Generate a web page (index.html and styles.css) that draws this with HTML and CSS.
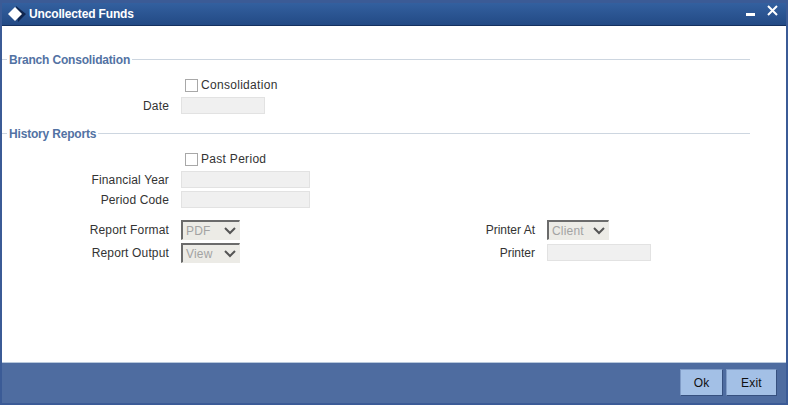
FILE: index.html
```html
<!DOCTYPE html>
<html lang="en">
<head>
<meta charset="utf-8">
<title>Uncollected Funds</title>
<link rel="stylesheet" href="styles.css">
</head>
<body>
<div class="window">
  <header class="titlebar">
    <svg class="logo" width="20" height="17" viewBox="0 0 20 17" aria-hidden="true">
      <path d="M9 0 L19 8 L11 16 Z" fill="#10264f"/>
      <path d="M8 1 L15 8 L8 15 L1 8 Z" fill="#ffffff"/>
    </svg>
    <h1 class="title">Uncollected Funds</h1>
    <div class="winbtns">
      <span class="minimize"></span>
      <svg class="close" width="11" height="11" viewBox="0 0 11 11" aria-hidden="true">
        <path d="M1 1 L10 10 M10 1 L1 10" stroke="#fff" stroke-width="2" fill="none"/>
      </svg>
    </div>
  </header>
  <main class="content">
    <section class="section first">
      <div class="legend"><span class="legend-text">Branch Consolidation</span></div>
      <div class="row check-row">
        <span class="label"></span>
        <label class="check"><span class="box"></span>Consolidation</label>
      </div>
      <div class="row date-row">
        <span class="label">Date</span>
        <span class="input w-date"></span>
      </div>
    </section>
    <section class="section second">
      <div class="legend"><span class="legend-text">History Reports</span></div>
      <div class="row check-row past">
        <span class="label"></span>
        <label class="check"><span class="box"></span>Past Period</label>
      </div>
      <div class="row year-row">
        <span class="label">Financial Year</span>
        <span class="input w-wide"></span>
      </div>
      <div class="row code-row">
        <span class="label">Period Code</span>
        <span class="input w-wide"></span>
      </div>
      <div class="columns">
        <div class="column">
          <div class="row sel-row">
            <span class="label">Report Format</span>
            <span class="select w-sel">PDF<svg class="chev" width="12" height="8" viewBox="0 0 12 8" aria-hidden="true"><path d="M1 1 L6 6 L11 1" stroke="#555" stroke-width="2" fill="none"/></svg></span>
          </div>
          <div class="row sel-row second-sel">
            <span class="label">Report Output</span>
            <span class="select w-sel">View<svg class="chev" width="12" height="8" viewBox="0 0 12 8" aria-hidden="true"><path d="M1 1 L6 6 L11 1" stroke="#555" stroke-width="2" fill="none"/></svg></span>
          </div>
        </div>
        <div class="column col-right">
          <div class="row sel-row">
            <span class="label">Printer At</span>
            <span class="select w-client">Client<svg class="chev" width="12" height="8" viewBox="0 0 12 8" aria-hidden="true"><path d="M1 1 L6 6 L11 1" stroke="#555" stroke-width="2" fill="none"/></svg></span>
          </div>
          <div class="row sel-row second-sel">
            <span class="label">Printer</span>
            <span class="input w-printer"></span>
          </div>
        </div>
      </div>
    </section>
  </main>
  <footer class="footer">
    <button class="btn" type="button">Ok</button>
    <button class="btn" type="button">Exit</button>
  </footer>
</div>
</body>
</html>
```
FILE: styles.css
```css
* { box-sizing: border-box; }
html, body { margin: 0; padding: 0; }
body { width: 788px; height: 405px; overflow: hidden; font-family: "Liberation Sans", Arial, sans-serif; font-size: 12px; color: #333; }
.window { width: 788px; height: 405px; display: flex; flex-direction: column; background: #3b5b96; padding: 3px 2px 2px 2px; }
.titlebar { height: 23px; flex: none; display: flex; align-items: center; background: linear-gradient(#33609f, #234a85); border-bottom: 1px solid #14305f; color: #fff; padding-left: 5px; }
.logo { flex: none; margin-top: 1px; }
.title { margin: 0 0 0 2px; font-size: 12px; font-weight: bold; color: #fff; letter-spacing: -.15px; }
.winbtns { margin-left: auto; align-self: flex-start; display: flex; align-items: flex-start; gap: 12px; padding-right: 8px; }
.minimize { width: 9px; height: 3px; background: #fff; margin-top: 10px; }
.close { margin-top: 2px; }
.content { flex: 1; background: #fff; border-bottom: 1px solid #b8c8dc; padding-top: 26px; }
.section { width: 748px; }
.second { margin-top: 12px; }
.legend { height: 14px; display: flex; align-items: center; padding-left: 5px; position: relative; }
.legend::before { content: ""; position: absolute; left: 0; right: 0; top: 7px; height: 1px; background: #cdd6e0; }
.legend-text { position: relative; top: 1px; background: #fff; padding: 0 2px; font-weight: bold; color: #5272a3; letter-spacing: -.18px; }
.row { display: flex; align-items: center; }
.label { width: 167px; margin-right: 12px; text-align: right; flex: none; letter-spacing: .15px; }
.col-right .label { letter-spacing: 0; }
.check-row { height: 14px; margin-top: 12px; }
.past { margin-top: 12px; }
.date-row { margin-top: 5px; height: 17px; }
.check { display: flex; align-items: center; gap: 3px; margin-left: 4px; letter-spacing: .3px; }
.box { width: 13px; height: 13px; border: 1px solid #a8a8a8; background: #fff; flex: none; }
.input { display: block; height: 17px; background: #f0f0f0; border: 1px solid #e2e2e2; }
.w-date { width: 84px; }
.w-wide { width: 129px; }
.w-printer { width: 104px; align-self: flex-start; margin-top: 1px; }
.year-row { height: 17px; margin-top: 5px; }
.code-row { height: 17px; margin-top: 3px; }
.columns { display: flex; margin-top: 12px; }
.column { width: 366px; flex: none; }
.sel-row { height: 20px; }
.second-sel { margin-top: 3px; }
.select { height: 20px; display: flex; align-items: center; justify-content: space-between; background: #ecebe6; border-style: solid; border-width: 2px 1px 1px 2px; border-color: #6b6b6b #ecebe6 #ecebe6 #6b6b6b; color: #a3a3a3; padding: 0 3px 0 3px; letter-spacing: .2px; }
.w-sel { width: 59px; }
.w-client { width: 62px; }
.footer { height: 40px; flex: none; display: flex; justify-content: flex-end; align-items: flex-start; gap: 3px; background: #4e6ca0; padding: 6px 9px 0 0; }
.btn { width: 43px; height: 27px; font: 12px "Liberation Sans", Arial, sans-serif; letter-spacing: .2px; color: #111; background: #a3c0e6; border: 1px solid; border-color: #7f9bc6 #36507f #36507f #7f9bc6; padding: 0; }
.btn + .btn { width: 51px; }
```
